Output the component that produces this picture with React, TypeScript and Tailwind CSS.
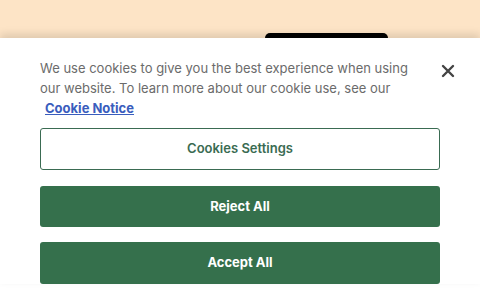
import React from "react";

const App = () => {
  return (
    <div className="w-[480px] h-[300px] overflow-hidden bg-white font-['Inter',sans-serif]">
      <div className="h-[38px] bg-[#fde4c6] flex justify-end pr-[92px] items-end">
        <div className="w-[123px] h-[5px] bg-black rounded-t-lg"></div>
      </div>
      <div className="relative bg-white shadow-[0_-4px_8px_rgba(0,0,0,0.12)] px-10 pt-[20px]">
        <button className="absolute right-[25px] top-[26px] text-[#444]">
          <svg width="14" height="14" viewBox="0 0 14 14">
            <path d="M2 2L12 12M12 2L2 12" stroke="currentColor" strokeWidth="2.4" strokeLinecap="round" />
          </svg>
        </button>
        <p className="text-[13px] leading-[20px] text-[#6b6b6b] pr-8">
          We use cookies to give you the best experience when using our website. To learn more about our cookie use, see our{" "}
          <br />
          <a className="ml-[5px] font-bold text-[#3a5dbd] underline" href="#">Cookie Notice</a>
        </p>
        <div className="flex flex-col mt-[10px]">
          <button className="h-[42px] w-full border border-[#3a6b52] rounded-[3px] text-[13px] font-semibold text-[#3a6b52]">
            Cookies Settings
          </button>
          <button className="h-[41px] w-full mt-4 bg-[#35704c] rounded-[3px] text-[13px] font-bold text-white">
            Reject All
          </button>
          <button className="h-[42px] w-full mt-[15px] bg-[#35704c] rounded-[3px] text-[13px] font-bold text-white">
            Accept All
          </button>
        </div>
      </div>
    </div>
  );
};

export default App;
